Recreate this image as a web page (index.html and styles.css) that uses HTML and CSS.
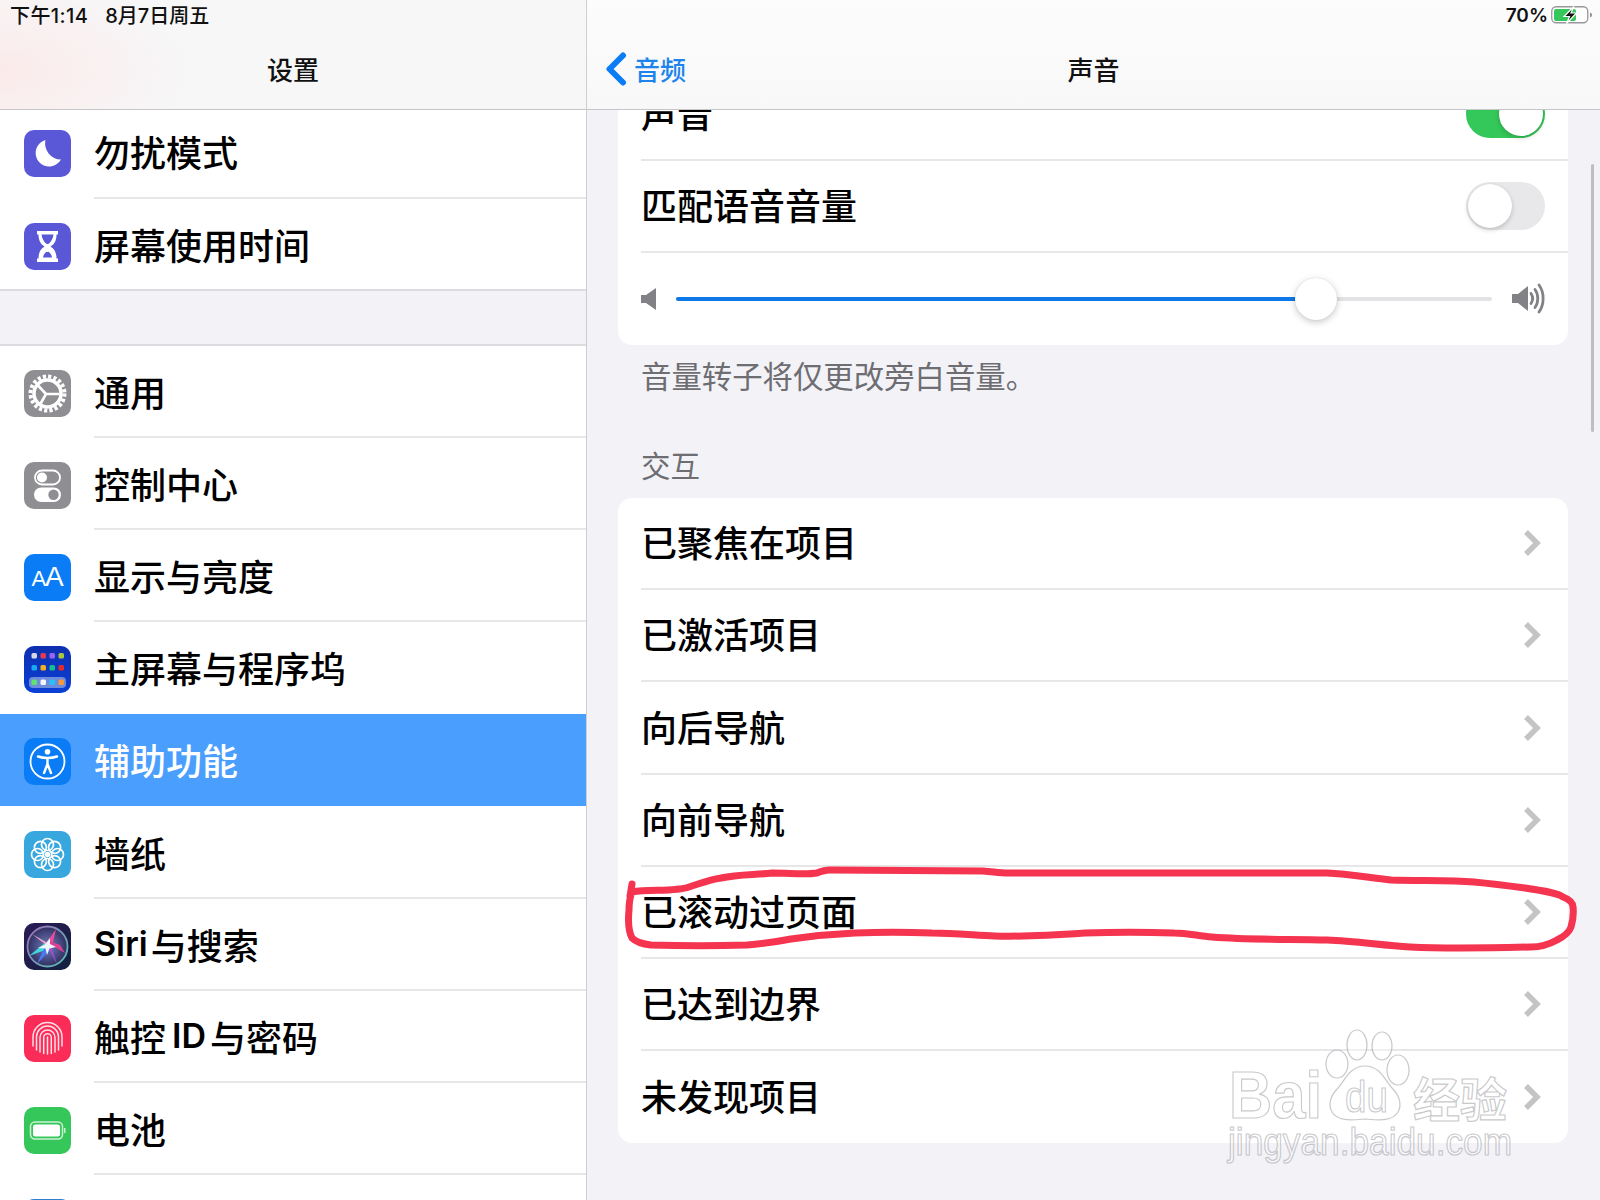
FILE: index.html
```html
<!DOCTYPE html>
<html lang="zh-CN">
<head>
<meta charset="utf-8">
<title>声音</title>
<link rel="stylesheet" href="styles.css">
</head>
<body>
<div class="screen">
  <aside class="sidebar">
    <header class="bar bar-left">
      <div class="status"><span class="status-time">下午1:14</span><span class="status-date">8月7日周五</span></div>
      <div class="nav nav-center"><h1 class="title">设置</h1></div>
    </header>
    <div class="list">
      <div class="group group-first">
        <div class="item"><svg class="icon" viewBox="0 0 47 47"><rect width="47" height="47" rx="10" fill="#5a58d6"/><path d="M21.500 10A13.500 13.500 0 1 0 37 29.500A16 16 0 0 1 21.500 10z" fill="#fff"/></svg><div class="item-body">勿扰模式</div></div>
        <div class="item"><svg class="icon" viewBox="0 0 47 47"><rect width="47" height="47" rx="10" fill="#5a58d6"/><path d="M13 8h21v3.500h-1.500c0 6-2 9.500-6 12c4 2.500 6 6 6 12h1.500v3.500h-21v-3.500h1.500c0-6 2-9.500 6-12c-4-2.500-6-6-6-12h-1.500z" fill="#fff"/><path d="M17.500 11.500h12c-.5 4-2.500 8-6 10c-3.500-2-5.500-6-6-10zM19 34.500c.5-3 2-5 4.500-6.500c2.500 1.500 4 3.500 4.500 6.500z" fill="#5a58d6"/><path d="M23.500 21v8" stroke="#fff" stroke-width="2"/></svg><div class="item-body">屏幕使用时间</div></div>
      </div>
      <div class="gap"></div>
      <div class="group">
        <div class="item"><svg class="icon" viewBox="0 0 47 47"><rect width="47" height="47" rx="10" fill="#8e8e93"/><circle cx="23.500" cy="23.500" r="17" fill="none" stroke="#fff" stroke-width="4" stroke-dasharray="3.200 2.150"/><circle cx="23.500" cy="23.500" r="13.500" fill="none" stroke="#fff" stroke-width="3.500"/><path d="M22 24L14 15.500M22 24H35.500M22 24L15.500 35.500" stroke="#fff" stroke-width="2.600" fill="none"/></svg><div class="item-body">通用</div></div>
        <div class="item"><svg class="icon" viewBox="0 0 47 47"><rect width="47" height="47" rx="10" fill="#8e8e93"/><rect x="11" y="8.500" width="25" height="14" rx="7" fill="none" stroke="#fff" stroke-width="1.800"/><circle cx="18" cy="15.500" r="5" fill="#fff"/><rect x="10" y="25.500" width="27" height="14.500" rx="7.250" fill="#fff"/><circle cx="29.500" cy="32.750" r="5.200" fill="#8e8e93"/></svg><div class="item-body">控制中心</div></div>
        <div class="item"><svg class="icon" viewBox="0 0 47 47"><rect width="47" height="47" rx="10" fill="#0a7cf5"/><text class="icon-aa-small" x="7.500" y="32">A</text><text class="icon-aa-big" x="21" y="32">A</text></svg><div class="item-body">显示与亮度</div></div>
        <div class="item"><svg class="icon" viewBox="0 0 47 47"><defs><linearGradient id="homeBg" x1="0" y1="0" x2="0" y2="1"><stop offset="0" stop-color="#0e2fb0"/><stop offset="1" stop-color="#0b3fd6"/></linearGradient></defs><rect width="47" height="47" rx="10" fill="url(#homeBg)"/><rect x="5" y="31" width="37" height="11" rx="4" fill="#6f8bdc"/><rect x="7.500" y="7" width="5.500" height="5.500" rx="1.500" fill="#d5d7e4"/><rect x="16.500" y="7" width="5.500" height="5.500" rx="1.500" fill="#e8394f"/><rect x="25.500" y="7" width="5.500" height="5.500" rx="1.500" fill="#9b63f0"/><rect x="34.500" y="7" width="5.500" height="5.500" rx="1.500" fill="#a9c63f"/><rect x="7.500" y="19" width="5.500" height="5.500" rx="1.500" fill="#19a9f2"/><rect x="16.500" y="19" width="5.500" height="5.500" rx="1.500" fill="#f3b21b"/><rect x="25.500" y="19" width="5.500" height="5.500" rx="1.500" fill="#16c08e"/><rect x="34.500" y="19" width="5.500" height="5.500" rx="1.500" fill="#ea2a2a"/><rect x="7.500" y="33.500" width="5.500" height="5.500" rx="1.500" fill="#5fe06f"/><rect x="16.500" y="33.500" width="5.500" height="5.500" rx="1.500" fill="#f4f6fb"/><rect x="25.500" y="33.500" width="5.500" height="5.500" rx="1.500" fill="#25c2f5"/><rect x="34.500" y="33.500" width="5.500" height="5.500" rx="1.500" fill="#f39a3b"/></svg><div class="item-body">主屏幕与程序坞</div></div>
        <div class="item item-active"><svg class="icon" viewBox="0 0 47 47"><rect width="47" height="47" rx="10" fill="#0a7cf5"/><circle cx="23.500" cy="23.500" r="17" fill="none" stroke="#fff" stroke-width="1.800"/><circle cx="23.500" cy="13.800" r="2.800" fill="#fff"/><path d="M14 18.500c3.500 1.200 6 1.500 9.500 1.500s6-.3 9.500-1.500M23.500 20v6.500M23.500 26l-3.500 9M23.500 26l3.500 9" fill="none" stroke="#fff" stroke-width="2.400" stroke-linecap="round"/></svg><div class="item-body">辅助功能</div></div>
        <div class="item"><svg class="icon" viewBox="0 0 47 47"><rect width="47" height="47" rx="10" fill="#37a7de"/><g fill="none" stroke="#fff" stroke-width="1.700"><circle cx="23.500" cy="13.500" r="6"/><circle cx="23.500" cy="33.500" r="6"/><circle cx="13.500" cy="23.500" r="6"/><circle cx="33.500" cy="23.500" r="6"/><circle cx="16.400" cy="16.400" r="6"/><circle cx="30.600" cy="16.400" r="6"/><circle cx="16.400" cy="30.600" r="6"/><circle cx="30.600" cy="30.600" r="6"/></g><circle cx="23.500" cy="23.500" r="2.800" fill="#fff"/></svg><div class="item-body">墙纸</div></div>
        <div class="item"><svg class="icon" viewBox="0 0 47 47"><defs><linearGradient id="siriBg" x1="0" y1="0" x2="1" y2="1"><stop offset="0" stop-color="#2b1a55"/><stop offset="1" stop-color="#12223f"/></linearGradient><linearGradient id="siriRing" x1="0" y1="0" x2="1" y2="1"><stop offset="0" stop-color="#a06ab8"/><stop offset="1" stop-color="#58c0b4"/></linearGradient><radialGradient id="siriDisc"><stop offset="0" stop-color="#6a7fb0"/><stop offset=".6" stop-color="#4a4f88"/><stop offset="1" stop-color="#2f2f5c"/></radialGradient></defs><rect width="47" height="47" rx="10" fill="url(#siriBg)"/><circle cx="23.500" cy="23.500" r="20" fill="url(#siriDisc)" stroke="url(#siriRing)" stroke-width="1.800"/><polygon points="21,22 32,6 28,24" fill="#ea4c9a"/><polygon points="24,26 5,33 22,19" fill="#3fd8dc"/><polygon points="21,23 13,41 28,25" fill="#4c78f2"/><polygon points="22,19 41,30 36,22 25,18" fill="#dd3f92"/><polygon points="23,22 33,41 27,23" fill="#b048d8"/><polygon points="26,25 8,11 22,19" fill="#f0a0cc"/><polygon points="26,15 26,21 32,24 25.500,25.500 23,32 21.500,25.500 14,25 21,21.500" fill="#eef6fb"/></svg><div class="item-body item-latin"><span class="latin latin-lead">Siri</span>与搜索</div></div>
        <div class="item"><svg class="icon" viewBox="0 0 47 47"><rect width="47" height="47" rx="10" fill="#fb2c58"/><g fill="none" stroke="#fff" stroke-opacity=".85" stroke-width="1.500" stroke-linecap="round"><path d="M9 31V22a14.500 14.500 0 0 1 29 0v9"/><path d="M12.500 35V22a11 11 0 0 1 22 0v13"/><path d="M16 37V22.500a7.500 7.500 0 0 1 15 0V37"/><path d="M19.700 38.500V22.500a3.800 3.800 0 0 1 7.600 0v16"/><path d="M23.500 22v17"/></g></svg><div class="item-body item-latin">触控<span class="latin">ID</span>与密码</div></div>
        <div class="item"><svg class="icon" viewBox="0 0 47 47"><rect width="47" height="47" rx="10" fill="#35c75a"/><rect x="6.500" y="15" width="32" height="17" rx="4.500" fill="none" stroke="#fff" stroke-opacity=".75" stroke-width="1.500"/><rect x="9" y="17.500" width="27" height="12" rx="2.500" fill="#fff"/><rect x="40" y="21" width="1.500" height="5" fill="#fff" fill-opacity=".75"/></svg><div class="item-body">电池</div></div>
        <div class="item"><svg class="icon" viewBox="0 0 47 47"><rect width="47" height="47" rx="10" fill="#2f7fd0"/></svg><div class="item-body"></div></div>
      </div>
    </div>
  </aside>

  <main class="detail">
    <header class="bar bar-right">
      <div class="status status-right"><span>70%</span>
        <svg class="battery" viewBox="0 0 42 18"><rect x=".75" y=".75" width="36" height="16" rx="4.500" fill="#fff" stroke="#97979b" stroke-width="1.300"/><rect x="3" y="3" width="22" height="12" rx="2" fill="#35c75a"/><path d="M39 6.500c1.300.4 2 1.300 2 2.500s-.7 2.100-2 2.500z" fill="#8e8e93"/><path d="M23 .5L13 10.500h5.500L15.500 17.500l10-10.500h-5.500z" fill="#111" stroke="#fff" stroke-width="1.200"/></svg>
      </div>
      <div class="nav nav-grid">
        <div class="back"><svg class="back-chevron" viewBox="0 0 22 34"><path d="M18 3.500L4.500 17L18 30.500" fill="none" stroke="#0a7cf5" stroke-width="6" stroke-linecap="round" stroke-linejoin="round"/></svg><span>音频</span></div>
        <h1 class="title">声音</h1>
      </div>
    </header>
    <div class="scroller">
      <section class="card card-top">
        <div class="row"><div class="row-body"><span class="row-label">声音</span><span class="toggle toggle-on"></span></div></div>
        <div class="row"><div class="row-body"><span class="row-label">匹配语音音量</span><span class="toggle"></span></div></div>
        <div class="row"><div class="row-body row-slider">
          <svg class="spk-low" viewBox="0 0 16 22"><path d="M0 7h5L15 0v22L5 15H0z" fill="#828286"/></svg>
          <div class="slider"><div class="slider-fill"></div><div class="slider-knob"></div></div>
          <svg class="spk-high" viewBox="0 0 33 31"><path d="M0 11h6l10-8v25L6 20H0z" fill="#828286"/><g fill="none" stroke="#828286" stroke-width="2.800" stroke-linecap="round"><path d="M19 10.500c2 3 2 7 0 10"/><path d="M23 6.500c3.700 5 3.700 13 0 18"/><path d="M27 2c5.500 7.500 5.500 19.500 0 27"/></g></svg>
        </div></div>
      </section>
      <p class="caption">音量转子将仅更改旁白音量。</p>
      <h2 class="section-label">交互</h2>
      <section class="card">
        <div class="row"><div class="row-body"><span class="row-label">已聚焦在项目</span><svg class="chevron" viewBox="0 0 18 28"><path d="M3 3l11 11L3 25" fill="none" stroke="#c4c4c7" stroke-width="5.500"/></svg></div></div>
        <div class="row"><div class="row-body"><span class="row-label">已激活项目</span><svg class="chevron" viewBox="0 0 18 28"><path d="M3 3l11 11L3 25" fill="none" stroke="#c4c4c7" stroke-width="5.500"/></svg></div></div>
        <div class="row"><div class="row-body"><span class="row-label">向后导航</span><svg class="chevron" viewBox="0 0 18 28"><path d="M3 3l11 11L3 25" fill="none" stroke="#c4c4c7" stroke-width="5.500"/></svg></div></div>
        <div class="row"><div class="row-body"><span class="row-label">向前导航</span><svg class="chevron" viewBox="0 0 18 28"><path d="M3 3l11 11L3 25" fill="none" stroke="#c4c4c7" stroke-width="5.500"/></svg></div></div>
        <div class="row"><div class="row-body"><span class="row-label">已滚动过页面</span><svg class="chevron" viewBox="0 0 18 28"><path d="M3 3l11 11L3 25" fill="none" stroke="#c4c4c7" stroke-width="5.500"/></svg></div></div>
        <div class="row"><div class="row-body"><span class="row-label">已达到边界</span><svg class="chevron" viewBox="0 0 18 28"><path d="M3 3l11 11L3 25" fill="none" stroke="#c4c4c7" stroke-width="5.500"/></svg></div></div>
        <div class="row"><div class="row-body"><span class="row-label">未发现项目</span><svg class="chevron" viewBox="0 0 18 28"><path d="M3 3l11 11L3 25" fill="none" stroke="#c4c4c7" stroke-width="5.500"/></svg></div></div>
      </section>
    </div>
    <div class="scrollbar"></div>
  </main>

  <svg class="overlay" viewBox="0 0 1600 1200">
    <path class="scribble" d="M632 884L630 896M632 892C650 889 675 892 689 887C702 883 708 880 721 878C738 874 755 875 772 873C790 873 805 875 817 873C822 871 825 870 830 870L983 871C995 872 1000 873 1008 873L1327 873C1350 874 1370 878 1391 880C1420 881 1450 880 1474 882C1495 884 1510 886 1525 888C1545 891 1558 893 1563 897C1571 900 1573 903 1573 907C1574 915 1573 920 1571 927C1569 933 1563 937 1557 940C1548 945 1540 947 1531 947C1490 948 1450 949 1410 947C1380 945 1355 941 1327 940C1290 939 1250 940 1212 937C1198 936 1188 933 1174 933C1145 932 1115 932 1085 933C1055 935 1025 937 995 936C973 935 953 933 932 933C905 932 880 932 855 933C832 934 812 936 791 939C775 942 762 944 747 945C715 946 683 946 651 945C642 944 636 942 632 938C628 930 628 920 629 910C629 903 630 897 632 892Z"/>
    <g class="wm">
      <ellipse cx="1357" cy="1045" rx="10" ry="15"/>
      <ellipse cx="1382" cy="1046" rx="10" ry="14"/>
      <ellipse cx="1337" cy="1064" rx="11" ry="14"/>
      <ellipse cx="1398" cy="1070" rx="11" ry="15"/>
      <path d="M1365 1066C1350 1066 1345 1080 1338 1088C1330 1096 1328 1105 1332 1112C1338 1122 1352 1120 1365 1119C1378 1120 1392 1122 1398 1112C1402 1105 1400 1096 1392 1088C1385 1080 1380 1066 1365 1066Z"/>
      <text class="wm-logo" x="1229" y="1118" textLength="93" lengthAdjust="spacingAndGlyphs">Bai</text>
      <text class="wm-du" x="1345" y="1112" textLength="43" lengthAdjust="spacingAndGlyphs">du</text>
      <text class="wm-cn" x="1413" y="1117">经验</text>
      <text class="wm-url" x="1228" y="1155" textLength="284" lengthAdjust="spacingAndGlyphs">jingyan.baidu.com</text>
    </g>
  </svg>
</div>
</body>
</html>
```
FILE: styles.css
```css
* { box-sizing: border-box; }
html, body { margin: 0; padding: 0; }
body {
  width: 1600px;
  height: 1200px;
  overflow: hidden;
  background: #f2f2f7;
  color: #000;
  font-family: Inter, "Noto Sans CJK SC", sans-serif;
}
.screen { position: relative; display: flex; width: 1600px; height: 1200px; overflow: hidden; }

.sidebar {
  display: flex;
  flex-direction: column;
  flex: 0 0 587px;
  height: 1200px;
  background: #f2f2f7;
  border-right: 1px solid #cfcfd3;
}
.detail {
  position: relative;
  display: flex;
  flex-direction: column;
  flex: 1;
  min-width: 0;
  height: 1200px;
  background: #f2f2f7;
}

.bar {
  position: relative;
  z-index: 2;
  flex: 0 0 110px;
  height: 110px;
  border-bottom: 1px solid #c6c6c9;
}
.bar-left {
  background:
    radial-gradient(ellipse 190px 90px at 0 70px, #fbeaea 0%, rgba(251, 234, 234, 0) 100%),
    #f7f7f8;
}
.bar-right { background: linear-gradient(#fcfcfd, #f8f8f9); }

.status {
  display: flex;
  align-items: center;
  gap: 17px;
  height: 30px;
  padding: 0 0 2px 10px;
  font-size: 20px;
  font-weight: 500;
  color: #111;
  white-space: nowrap;
}
.status-time { letter-spacing: .4px; }
.status-right { justify-content: flex-end; gap: 3px; padding: 0 7px 0 0; font-size: 19px; font-weight: 600; }
.battery { width: 42px; height: 18px; }

.nav { height: 77px; }
.nav-center { display: flex; align-items: center; justify-content: center; }
.nav-grid { display: grid; grid-template-columns: 1fr auto 1fr; align-items: center; }
.title { grid-column: 2; grid-row: 1; margin: 0; font-size: 26px; font-weight: 500; color: #111; }
.back {
  grid-column: 1;
  grid-row: 1;
  display: flex;
  align-items: center;
  gap: 7px;
  padding-left: 18px;
  font-size: 26px;
  font-weight: 500;
  color: #1c84ea;
}
.back-chevron { width: 22px; height: 34px; }

.list { flex: 1; min-height: 0; overflow: hidden; }
.group { background: #fff; }
.group-first { margin-top: -3.600px; }
.gap { height: 55.400px; border-bottom: 2px solid #dcdce0; }
.item {
  display: flex;
  align-items: stretch;
  height: 92.100px;
  padding-left: 24px;
  background: #fff;
}
.icon { flex: 0 0 47px; width: 47px; height: 47px; align-self: center; margin: 3px 23px 0 0; }
.item-body {
  display: flex;
  align-items: center;
  flex: 1;
  font-size: 36px;
  font-weight: 500;
  border-bottom: 2px solid #e7e7ea;
}
.item-active .item-body, .item:has(+ .item-active) .item-body { border-bottom-color: transparent; }
.group-first .item:last-child { box-shadow: inset 0 -2px 0 #dcdce0; }
.group-first .item:last-child .item-body { border-bottom-color: transparent; }
.item-active { background: #4a9efd; color: #fff; }
.latin { margin: 0 4px 0 6px; font-weight: 600; font-size: 34px; }
.latin-lead { margin: 0 3px 0 0; }

.icon-aa-small { font: 400 22px "Liberation Sans", sans-serif; fill: #fff; }
.icon-aa-big { font: 400 28px "Liberation Sans", sans-serif; fill: #fff; }

.scroller { flex: 1; min-height: 0; overflow: hidden; padding: 0 32px 0 31px; }
.card { background: #fff; border-radius: 14px; }
.card-top { margin-top: -41.500px; }
.row { height: 92.100px; padding-left: 23px; }
.row-body {
  display: flex;
  align-items: center;
  justify-content: space-between;
  height: 100%;
  padding-right: 23px;
  font-size: 36px;
  font-weight: 500;
  border-bottom: 2px solid #e7e7ea;
}
.row:last-child .row-body { border-bottom: 0; }
.row-label { margin-bottom: 4px; }
.row-slider { justify-content: flex-start; }

.toggle {
  position: relative;
  flex: 0 0 79px;
  height: 48px;
  border-radius: 24px;
  background: #e8e8ea;
}
.toggle::after {
  content: "";
  position: absolute;
  top: 2px;
  left: 2px;
  width: 44px;
  height: 44px;
  border-radius: 50%;
  background: #fff;
  box-shadow: 0 2px 5px rgba(0, 0, 0, .18), 0 0 1px rgba(0, 0, 0, .1);
}
.toggle-on { background: #34c759; }
.toggle-on::after { left: 33px; }

.spk-low { flex: 0 0 16px; width: 16px; height: 22px; margin-right: 19px; }
.slider { position: relative; flex: 0 0 816px; height: 4px; border-radius: 2px; background: #e3e3e6; }
.slider-fill { width: 640px; height: 4px; border-radius: 2px; background: #0f78e8; }
.slider-knob {
  position: absolute;
  top: -19px;
  left: 619px;
  width: 42px;
  height: 42px;
  border-radius: 50%;
  background: #fff;
  box-shadow: 0 2px 7px rgba(0, 0, 0, .22), 0 0 1px rgba(0, 0, 0, .15);
}
.spk-high { flex: 0 0 33px; width: 33px; height: 31px; margin-left: 20px; }
.chevron { flex: 0 0 18px; width: 18px; height: 28px; margin-right: 4px; }

.caption {
  margin: 0;
  height: 68px;
  padding-left: 23px;
  font-size: 30.400px;
  line-height: 64px;
  color: #6d6d72;
}
.section-label {
  margin: 0;
  height: 85.500px;
  padding: 33.500px 0 0 23px;
  font-size: 29.500px;
  font-weight: 400;
  line-height: 40px;
  color: #6d6d72;
}

.scrollbar {
  position: absolute;
  top: 164px;
  right: 6px;
  width: 3px;
  height: 268px;
  border-radius: 2px;
  background: #bdbdc2;
}

.overlay { position: absolute; inset: 0; z-index: 3; width: 1600px; height: 1200px; pointer-events: none; }
.scribble { fill: none; stroke: #f5344f; stroke-width: 7; stroke-linejoin: round; stroke-linecap: round; }
.wm ellipse, .wm path { fill: rgba(255, 255, 255, .35); stroke: rgba(165, 165, 170, .6); stroke-width: 1.200; }
.wm text { fill: rgba(255, 255, 255, .45); stroke: rgba(165, 165, 170, .6); stroke-width: 1.200; }
.wm-logo { font: 700 66px "Liberation Sans", sans-serif; }
.wm-du { font: 400 44px "Liberation Sans", sans-serif; }
.wm-cn { font: 700 47px "Noto Sans CJK SC", sans-serif; }
.wm-url { font: 400 38px "Liberation Sans", sans-serif; }
```
